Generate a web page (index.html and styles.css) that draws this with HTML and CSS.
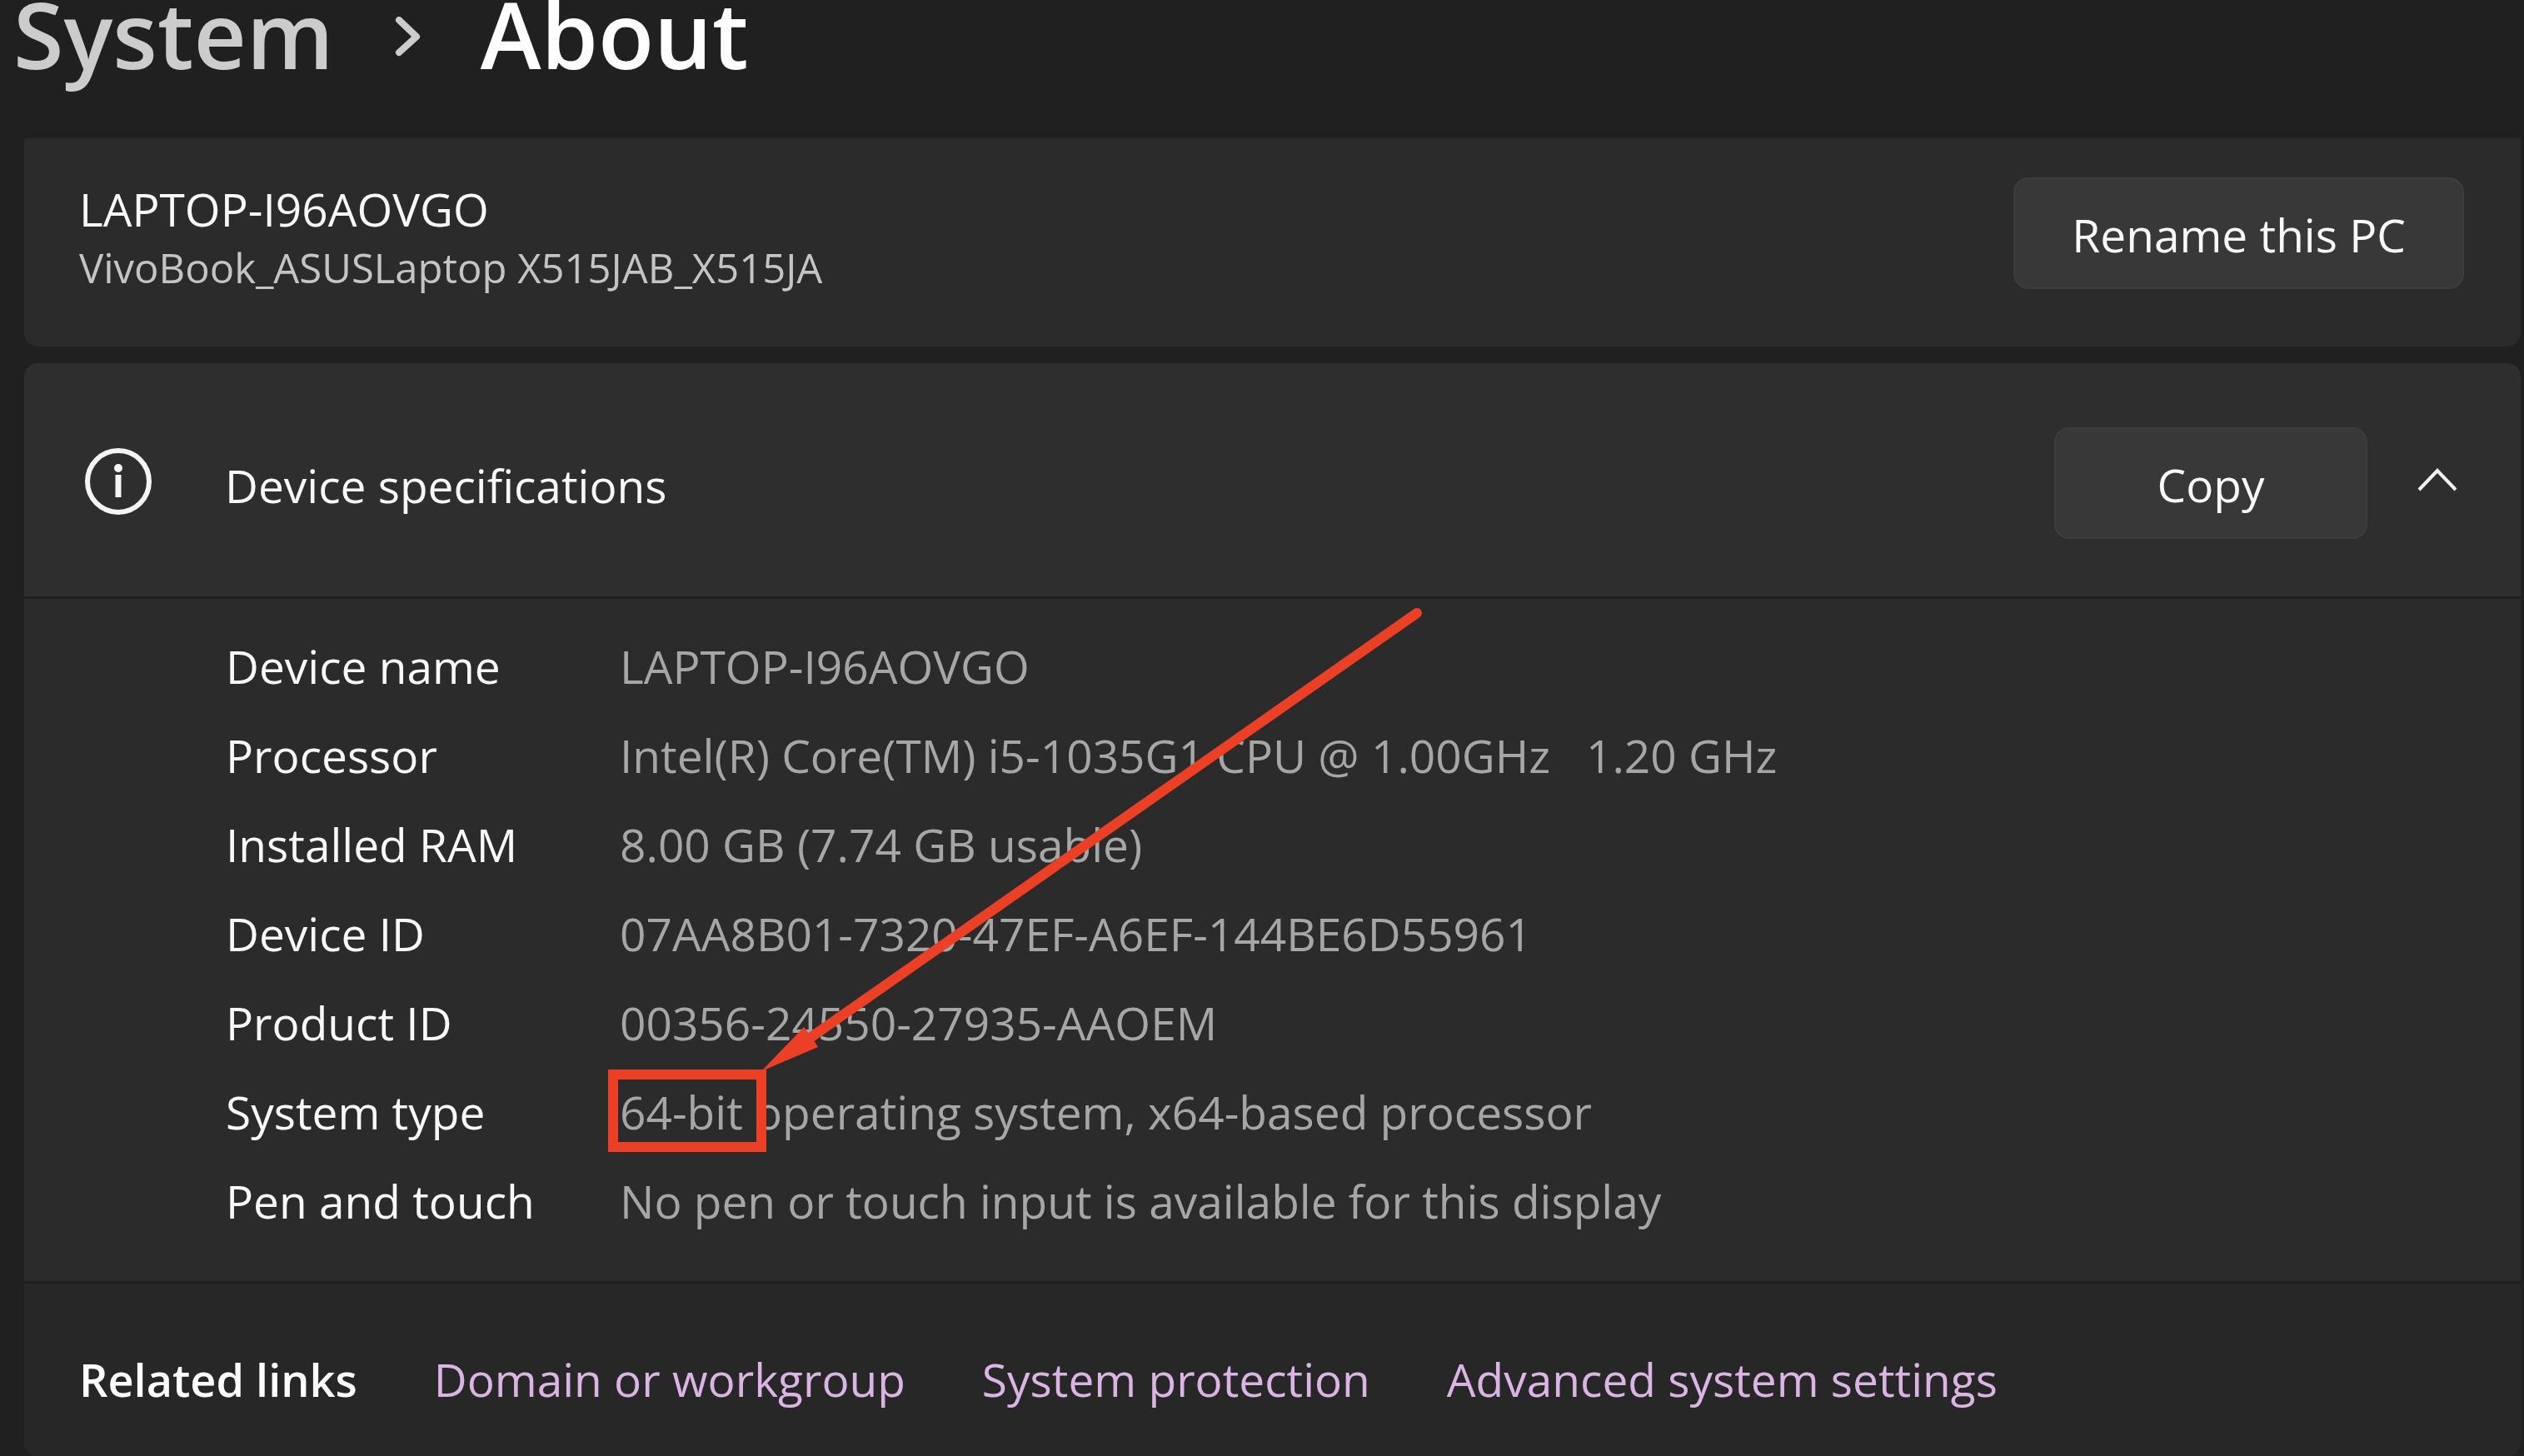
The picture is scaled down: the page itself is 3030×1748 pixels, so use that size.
FILE: index.html
```html
<!DOCTYPE html>
<html lang="en">
<head>
    <meta charset="UTF-8">
    <meta name="viewport" content="width=device-width, initial-scale=1.0">
    <title>System &gt; About</title>
    <link rel="stylesheet" href="styles.css">
</head>
<body>
    <nav class="breadcrumb">
        <a class="crumb" href="#">System</a>
        <svg class="crumb-arrow" viewBox="0 0 32 48" fill="none" stroke="#cccccc" stroke-width="8" stroke-linecap="round" stroke-linejoin="round">
            <path d="M6 4 L27 24 L6 43"/>
        </svg>
        <h1 class="current">About</h1>
    </nav>

    <main>
        <section class="card pc">
            <div>
                <h2 class="pc-name">LAPTOP-I96AOVGO</h2>
                <p class="pc-model">VivoBook_ASUSLaptop X515JAB_X515JA</p>
            </div>
            <button class="button" type="button">Rename this PC</button>
        </section>

        <section class="card specs">
            <div class="specs-header">
                <svg class="info" viewBox="0 0 80 84" fill="none" stroke="#f4f4f4">
                    <circle cx="40" cy="40" r="37" stroke-width="6"/>
                    <path d="M40 32 V59" stroke-width="7"/>
                    <circle cx="40" cy="24" r="5" fill="#f4f4f4" stroke="none"/>
                </svg>
                <h2 class="specs-title">Device specifications</h2>
                <button class="button" type="button">Copy</button>
                <button class="collapse" type="button" aria-label="Collapse">
                    <svg class="chevron" viewBox="0 0 48 36" fill="none" stroke="#f0f0f0" stroke-width="4">
                        <path d="M2 26 L24 3 L46 26"/>
                    </svg>
                </button>
            </div>

            <div class="specs-body">
                <table class="spec-table">
                    <tr><th>Device name</th><td>LAPTOP-I96AOVGO</td></tr>
                    <tr><th>Processor</th><td>Intel(R) Core(TM) i5-1035G1 CPU @ 1.00GHz &nbsp; 1.20 GHz</td></tr>
                    <tr><th>Installed RAM</th><td>8.00 GB (7.74 GB usable)</td></tr>
                    <tr><th>Device ID</th><td>07AA8B01-7320-47EF-A6EF-144BE6D55961</td></tr>
                    <tr><th>Product ID</th><td>00356-24550-27935-AAOEM</td></tr>
                    <tr>
                        <th>System type</th>
                        <td><span class="highlight">64-bit<svg class="pointer" viewBox="0 0 810 566" fill="#eb4025">
                            <path d="M69 520 L796 11" stroke="#eb4025" stroke-width="12" stroke-linecap="round"/>
                            <path d="M9 561 L60 508 L66 516 L72 524 L77 532 Z"/>
                        </svg></span> operating system, x64-based processor</td>
                    </tr>
                    <tr><th>Pen and touch</th><td>No pen or touch input is available for this display</td></tr>
                </table>
            </div>

            <div class="related">
                <h3 class="related-title">Related links</h3>
                <a class="link" href="#">Domain or workgroup</a>
                <a class="link" href="#">System protection</a>
                <a class="link" href="#">Advanced system settings</a>
            </div>
        </section>
    </main>
</body>
</html>
```
FILE: styles.css
```css
*, *::after {
    box-sizing: border-box;
}
body {
    margin: 0;
    background: #202020;
    color: #f8f8f8;
    font-family: "Open Sans", "Noto Sans", sans-serif;
    font-size: 55px;
}
h1, h2, h3, p {
    margin: 0;
    font-weight: 400;
}
.breadcrumb {
    display: flex;
    align-items: flex-start;
    gap: 72px;
    height: 166px;
    padding-left: 16px;
    font-size: 110px;
    line-height: 80px;
}
.crumb {
    color: #cccccc;
    font-weight: 600;
    text-decoration: none;
}
.crumb-arrow {
    width: 32px;
    height: 48px;
    margin-top: 20px;
}
.current {
    color: #ffffff;
    font-size: 110px;
    font-weight: 600;
}
main {
    display: flex;
    flex-direction: column;
    gap: 20px;
    padding: 0 4px 0 29px;
}
.card {
    background: #2b2b2b;
    border-radius: 16px;
    overflow: hidden;
}
.pc {
    display: flex;
    justify-content: space-between;
    align-items: flex-start;
    padding: 47px 68px 63px 66px;
    border-radius: 0 0 16px 16px;
}
.pc-name {
    font-size: 55px;
    line-height: 76px;
}
.pc-model {
    color: #c4c4c4;
    font-size: 49px;
    line-height: 64px;
}
.button {
    min-width: 376px;
    height: 134px;
    padding: 2px 68px 0;
    background: #383838;
    border: 2px solid #3d3d3d;
    border-radius: 18px;
    color: #f8f8f8;
    font-family: inherit;
    font-size: 55px;
    cursor: pointer;
}
.button:hover {
    background: #404040;
}
.specs-header {
    display: flex;
    align-items: center;
    height: 283px;
    padding: 8px 76px 0 73px;
    background: #2e2e2e;
    border-bottom: 3px solid #1f1f1f;
}
.info {
    width: 80px;
    height: 84px;
    margin-right: 88px;
}
.specs-title {
    flex: 1;
    padding-top: 4px;
    font-size: 55px;
}
.collapse {
    display: flex;
    margin-left: 60px;
    padding: 0;
    background: none;
    border: none;
    cursor: pointer;
}
.chevron {
    width: 48px;
    height: 36px;
}
.specs-body {
    padding: 27px 64px 43px 242px;
    border-bottom: 3px solid #1f1f1f;
}
.spec-table {
    border-collapse: collapse;
    line-height: 107px;
}
.spec-table th {
    width: 473px;
    padding: 0;
    font-weight: 400;
    text-align: left;
}
.spec-table td {
    padding: 0;
    color: #a6a6a6;
}
.highlight {
    display: inline-block;
    position: relative;
}
.highlight::after {
    content: "";
    position: absolute;
    top: 3px;
    left: -14px;
    width: 190px;
    height: 99px;
    border: 12px solid #eb4025;
}
.pointer {
    position: absolute;
    left: 161px;
    bottom: 97px;
    width: 810px;
    height: 566px;
}
.related {
    display: flex;
    align-items: center;
    gap: 92px;
    padding: 65px 64px 42px 66px;
    background: #272727;
    line-height: 100px;
}
.related-title {
    color: #ffffff;
    font-size: 54px;
    font-weight: 600;
}
.link {
    color: #dab4e3;
    text-decoration: none;
}
.link:hover {
    text-decoration: underline;
}
```
